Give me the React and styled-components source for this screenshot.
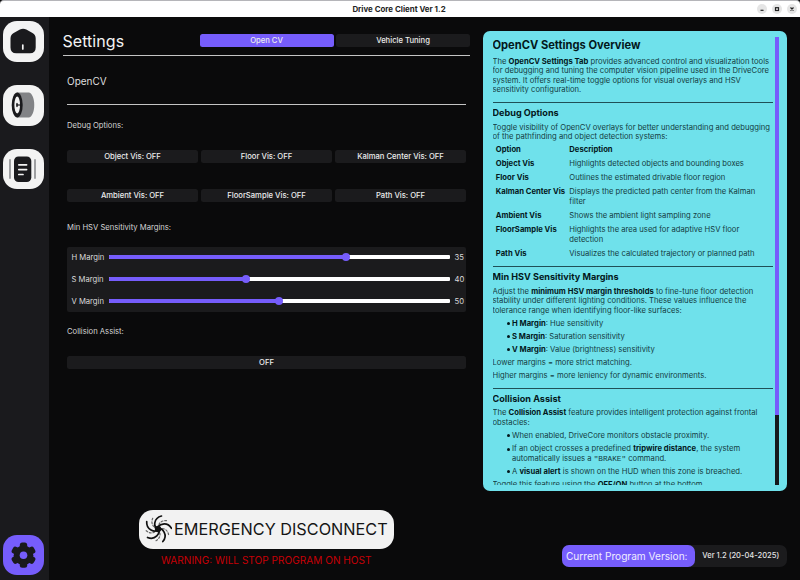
import React from "react";
import styled, { createGlobalStyle } from "styled-components";

const Global = createGlobalStyle`
  * { box-sizing: border-box; }
  html, body { margin: 0; background: #0a0a0b; overflow: hidden; }
  body { font-family: Inter, "Noto Sans", sans-serif; }
`;

const Window = styled.div`
  width: 800px;
  height: 580px;
  display: flex;
  flex-direction: column;
  background: #0a0a0b;
  overflow: hidden;
  white-space: nowrap;
`;
const TitleBar = styled.header`
  flex: 0 0 17px;
  display: grid;
  grid-template-columns: 1fr auto 1fr;
  align-items: center;
  background: #fff;
  border-top: 1px solid #b5b5b9;
  border-radius: 4px 4px 0 0;
  color: #242424;
  font-size: 7.9px;
  font-weight: 700;
  line-height: 14px;
  padding-bottom: 1px;
`;
const WindowTitle = styled.span`
  grid-column: 2;
  padding-right: 2px;
`;
const Controls = styled.div`
  display: flex;
  justify-content: flex-end;
  gap: 5px;
  padding-right: 3px;
  svg { width: 10px; height: 10px; display: block; }
`;
const Body = styled.div`
  flex: 1;
  display: flex;
  min-height: 0;
`;
const Sidebar = styled.nav`
  width: 49px;
  padding: 4.3px 0 5px 3px;
  display: flex;
  flex-direction: column;
  gap: 23.3px;
  background: #1a1a1d;
`;
const NavButton = styled.button`
  width: 40.5px;
  height: 40.5px;
  border: 0;
  padding: 0;
  border-radius: 14px;
  background: ${(p) => (p.$active ? "#765dfc" : "#f3f3f3")};
  margin-top: ${(p) => (p.$last ? "auto" : "0")};
  svg { display: block; width: 40.5px; height: 40.5px; }
`;
const Main = styled.main`
  width: 421px;
  padding: 0 0 0 13.5px;
  display: flex;
  flex-direction: column;
`;
const Header = styled.div`
  height: 39px;
  padding-top: 17px;
  display: flex;
  justify-content: space-between;
  border-bottom: 1px solid #c4c4c4;
`;
const Heading = styled.h1`
  margin: -3px 0 0;
  font-size: 16px;
  line-height: 20px;
  font-weight: 400;
  letter-spacing: 0.05px;
  color: #f4f4f4;
`;
const Tabs = styled.div`
  display: grid;
  grid-template-columns: 134px 134px;
  gap: 2.5px;
`;
const Button = styled.button`
  height: 13px;
  padding: 0;
  border: 0;
  border-radius: 2.5px;
  font: 500 7.65px/13px Inter, sans-serif;
  color: #ececec;
  background: ${(p) => (p.$active ? "#765dfc" : "#1b1b1d")};
`;
const Content = styled.section`
  padding: 0 4px 0 4.5px;
  display: flex;
  flex-direction: column;
`;
const Title = styled.h2`
  margin: 0;
  height: 49px;
  line-height: 51px;
  font-size: 10px;
  font-weight: 400;
  color: #dedede;
  border-bottom: 1px solid #c4c4c4;
`;
const Label = styled.div`
  height: ${(p) => p.$h}px;
  line-height: ${(p) => p.$line}px;
  font-size: 7.65px;
  color: #d4d4d4;
`;
const ButtonGrid = styled.div`
  display: grid;
  grid-template-columns: repeat(3, 1fr);
  gap: 26px 3px;
`;
const Sliders = styled.div`
  height: 65px;
  border-radius: 2px;
  background: #1b1b1d;
  padding: 0 2px 0 4.5px;
  display: grid;
  grid-template-rows: repeat(3, 22px);
  font-size: 7.65px;
  color: #dadada;
`;
const SliderRow = styled.div`
  display: grid;
  grid-template-columns: 37px 341px auto;
  align-items: center;
  line-height: 21px;
  height: 21px;
`;
const Value = styled.span`padding-left: 5px;`;
const Track = styled.div`
  height: 4px;
  border-radius: 1px;
  background: #fff;
`;
const Fill = styled.div`
  height: 4px;
  border-radius: 1px;
  background: #765dfc;
  display: flex;
  align-items: center;
  justify-content: flex-end;
`;
const Knob = styled.i`
  width: 8px;
  height: 8px;
  flex: none;
  margin-right: -4px;
  border-radius: 50%;
  background: #765dfc;
`;
const Emergency = styled.div`
  margin-top: auto;
  padding: 0 0 14px 76.5px;
  width: 331px;
  display: flex;
  flex-direction: column;
  align-items: stretch;
`;
const EmergencyButton = styled.button`
  height: 38.5px;
  border: 0;
  border-radius: 14px;
  background: #f2f2f2;
  padding: 0 6px 0 5px;
  display: flex;
  align-items: center;
  gap: 2px;
  font: 400 16.25px/38px Inter, sans-serif;
  color: #151515;
  svg { flex: none; width: 28px; height: 28px; }
`;
const Warning = styled.div`
  margin-top: 5.5px;
  line-height: 12px;
  font-size: 10.1px;
  text-align: center;
  color: #c60006;
`;
const Aside = styled.aside`
  flex: 1;
  padding: 14px 13.5px 13.5px 12.5px;
  display: flex;
  flex-direction: column;
  justify-content: space-between;
`;
const DocPanel = styled.article`
  height: 460px;
  border-radius: 7px;
  background: #6fe1eb;
  padding: 6px 8px 6px 10px;
  display: flex;
  gap: 1.5px;
`;
const Doc = styled.div`
  flex: 1;
  overflow: hidden;
  font-size: 7.67px;
  line-height: 9.5px;
  color: #143c42;
  b { font-weight: 700; color: #03181c; }
  code { font: 7.7px "Liberation Mono", monospace; line-height: 1; }
`;
const ScrollBar = styled.div`
  width: 4px;
  background: #15191c;
`;
const Thumb = styled.div`
  height: 378px;
  background: #765dfc;
`;
const DocTitle = styled.h2`
  margin: 0;
  height: 16px;
  line-height: 16px;
  font-size: 11.15px;
  font-weight: 700;
  color: #03181c;
`;
const SubTitle = styled.h3`
  margin: 0;
  height: 12px;
  line-height: 12px;
  font-size: 9.1px;
  font-weight: 700;
  color: #03181c;
`;
const Para = styled.p`margin: 3.5px 0 0;`;
const Rule = styled.div`
  height: 1px;
  margin: 7.5px 0 4px;
  background: #1f5057;
`;
const Options = styled.div`
  margin-top: 3px;
  padding-left: 3.3px;
  display: grid;
  grid-template-columns: 73.5px 1fr;
  row-gap: 4.75px;
`;
const List = styled.ul`
  margin: 3.6px 0 0;
  padding: 0 0 0 14.5px;
  list-style: none;
  display: grid;
  row-gap: 3.7px;
`;
const Item = styled.li`
  display: flex;
  gap: 2px;
  &::before {
    content: "";
    flex: none;
    width: 3px;
    height: 3px;
    margin-top: 3.3px;
    border-radius: 50%;
    background: #03181c;
  }
`;
const Version = styled.div`
  align-self: flex-end;
  width: 225px;
  height: 22px;
  display: flex;
  border-radius: 7px;
  background: #1b1b1d;
  line-height: 22px;
`;
const VersionLabel = styled.span`
  width: 133.5px;
  border-radius: 7px;
  background: #765dfc;
  color: #efecff;
  font-size: 10.15px;
  text-align: center;
  padding-right: 3px;
`;
const VersionValue = styled.span`
  flex: 1;
  text-align: center;
  font-size: 7.55px;
  font-weight: 500;
  color: #e4e4e4;
`;

const HomeIcon = () => (
  <svg viewBox="0 0 40.5 40.5">
    <path d="M7.500 17.500q0-4 3.200-5.600l6.200-3.300q3.200-1.700 6.400 0l6.200 3.300q3.200 1.600 3.200 5.600v9q0 5.800-5.800 5.800H13.300q-5.800 0-5.800-5.800Z" fill="#1a1a1d" />
    <path d="M19.800 24v4" stroke="#f3f3f3" strokeWidth="1.700" strokeLinecap="round" />
  </svg>
);
const WheelIcon = () => (
  <svg viewBox="0 0 40.5 40.5">
    <path d="M14 7.500h12c7 2 7 23 0 25H14Z" fill="#828386" />
    <ellipse cx="14.200" cy="20" rx="5.500" ry="12.500" fill="#1a1a1d" />
    <ellipse cx="14.200" cy="20" rx="2.800" ry="8.500" fill="#f3f3f3" />
    <path d="M14 20H17.500" stroke="#1a1a1d" strokeWidth="1.200" />
    <ellipse cx="14" cy="20" rx="0.900" ry="2.200" fill="#1a1a1d" />
  </svg>
);
const LogIcon = () => (
  <svg viewBox="0 0 40.5 40.5">
    <path d="M7 11v18M32 11v18" stroke="#96979a" strokeWidth="1.800" strokeLinecap="round" />
    <rect x="11" y="7.500" width="17.300" height="25.500" rx="4.500" fill="#1a1a1d" />
    <path d="M15.800 15.800h7.800M15.800 20.600h7.800M15.800 25.500h4.200" stroke="#f3f3f3" strokeWidth="1.700" strokeLinecap="round" />
  </svg>
);
const GearIcon = () => (
  <svg viewBox="0 0 40.5 40.5">
    <g fill="#1a1a1d">
      <circle cx="20.500" cy="20.200" r="9.800" />
      {[0, 60, 120, 180, 240, 300].map((a) => (
        <rect key={a} x="16.800" y="7.600" width="7.400" height="8" rx="2.500" transform={`rotate(${a} 20.500 20.200)`} />
      ))}
    </g>
    <circle cx="20.500" cy="20.200" r="3.800" fill="#765dfc" />
  </svg>
);
const SwirlIcon = () => (
  <svg viewBox="0 0 28 28" fill="none" stroke="#111" strokeLinecap="round">
    {[0, 72, 144, 216, 288].map((a) => (
      <g key={a} transform={`rotate(${a} 14 14)`}>
        <path d="M14 15.500C9 12 9.500 3 17.500 1" strokeWidth="1.700" />
        <path d="M15 9.500C16 7 19 5 23.500 5.800" strokeWidth="1.200" strokeDasharray="1.800 1.800" stroke="#666" />
      </g>
    ))}
    <circle cx="14" cy="14" r="2.400" strokeWidth="1.500" />
  </svg>
);
const Control = ({ children }) => (
  <svg viewBox="0 0 10 10">
    <circle cx="5" cy="5" r="5" fill="#e5e5e5" />
    <g stroke="#222" strokeWidth="1.200" fill="none">{children}</g>
  </svg>
);

const toggles = ["Object Vis", "Floor Vis", "Kalman Center Vis", "Ambient Vis", "FloorSample Vis", "Path Vis"];
const sliders = [["H Margin", 35, 69.6], ["S Margin", 40, 40.3], ["V Margin", 50, 50]];
const options = [
  ["Object Vis", "Highlights detected objects and bounding boxes"],
  ["Floor Vis", "Outlines the estimated drivable floor region"],
  ["Kalman Center Vis", <>Displays the predicted path center from the Kalman<br />filter</>],
  ["Ambient Vis", "Shows the ambient light sampling zone"],
  ["FloorSample Vis", <>Highlights the area used for adaptive HSV floor<br />detection</>],
  ["Path Vis", "Visualizes the calculated trajectory or planned path"],
];

export default function App() {
  return (
    <Window>
      <Global />
      <TitleBar>
        <WindowTitle>Drive Core Client Ver 1.2</WindowTitle>
        <Controls>
          <Control><path d="M3.500 6.300h3" /></Control>
          <Control><rect x="3.500" y="3.700" width="3" height="2.800" /></Control>
          <Control><path d="M3.500 3.500l3 3m0-3l-3 3" /></Control>
        </Controls>
      </TitleBar>
      <Body>
        <Sidebar>
          <NavButton aria-label="Home"><HomeIcon /></NavButton>
          <NavButton aria-label="Drive"><WheelIcon /></NavButton>
          <NavButton aria-label="Logs"><LogIcon /></NavButton>
          <NavButton aria-label="Settings" $active $last><GearIcon /></NavButton>
        </Sidebar>
        <Main>
          <Header>
            <Heading>Settings</Heading>
            <Tabs>
              <Button $active>Open CV</Button>
              <Button>Vehicle Tuning</Button>
            </Tabs>
          </Header>
          <Content>
            <Title>OpenCV</Title>
            <Label $h={45} $line={41}>Debug Options:</Label>
            <ButtonGrid>
              {toggles.map((name) => <Button key={name}>{name}: OFF</Button>)}
            </ButtonGrid>
            <Label $h={44.5} $line={51}>Min HSV Sensitivity Margins:</Label>
            <Sliders>
              {sliders.map(([name, value, pct]) => (
                <SliderRow key={name}>
                  <span>{name}</span>
                  <Track><Fill style={{ width: `${pct}%` }}><Knob /></Fill></Track>
                  <Value>{value}</Value>
                </SliderRow>
              ))}
            </Sliders>
            <Label $h={44.5} $line={40}>Collision Assist:</Label>
            <Button>OFF</Button>
          </Content>
          <Emergency>
            <EmergencyButton><SwirlIcon /><span>EMERGENCY DISCONNECT</span></EmergencyButton>
            <Warning>WARNING: WILL STOP PROGRAM ON HOST</Warning>
          </Emergency>
        </Main>
        <Aside>
          <DocPanel>
            <Doc>
              <DocTitle>OpenCV Settings Overview</DocTitle>
              <Para>
                The <b>OpenCV Settings Tab</b> provides advanced control and visualization tools<br />
                for debugging and tuning the computer vision pipeline used in the DriveCore<br />
                system. It offers real-time toggle options for visual overlays and HSV<br />
                sensitivity configuration.
              </Para>
              <Rule />
              <SubTitle>Debug Options</SubTitle>
              <Para>
                Toggle visibility of OpenCV overlays for better understanding and debugging<br />
                of the pathfinding and object detection systems:
              </Para>
              <Options>
                <b>Option</b><b>Description</b>
                {options.map(([name, text]) => (
                  <React.Fragment key={name}><b>{name}</b><span>{text}</span></React.Fragment>
                ))}
              </Options>
              <Rule />
              <SubTitle>Min HSV Sensitivity Margins</SubTitle>
              <Para>
                Adjust the <b>minimum HSV margin thresholds</b> to fine-tune floor detection<br />
                stability under different lighting conditions. These values influence the<br />
                tolerance range when identifying floor-like surfaces:
              </Para>
              <List>
                <Item><span><b>H Margin</b>: Hue sensitivity</span></Item>
                <Item><span><b>S Margin</b>: Saturation sensitivity</span></Item>
                <Item><span><b>V Margin</b>: Value (brightness) sensitivity</span></Item>
              </List>
              <Para>Lower margins = more strict matching.</Para>
              <Para>Higher margins = more leniency for dynamic environments.</Para>
              <Rule />
              <SubTitle>Collision Assist</SubTitle>
              <Para>
                The <b>Collision Assist</b> feature provides intelligent protection against frontal<br />
                obstacles:
              </Para>
              <List>
                <Item><span>When enabled, DriveCore monitors obstacle proximity.</span></Item>
                <Item>
                  <span>
                    If an object crosses a predefined <b>tripwire distance</b>, the system<br />
                    automatically issues a <code>"BRAKE"</code> command.
                  </span>
                </Item>
                <Item><span>A <b>visual alert</b> is shown on the HUD when this zone is breached.</span></Item>
              </List>
              <Para>Toggle this feature using the <b>OFF/ON</b> button at the bottom.</Para>
            </Doc>
            <ScrollBar><Thumb /></ScrollBar>
          </DocPanel>
          <Version>
            <VersionLabel>Current Program Version:</VersionLabel>
            <VersionValue>Ver 1.2 (20-04-2025)</VersionValue>
          </Version>
        </Aside>
      </Body>
    </Window>
  );
}
